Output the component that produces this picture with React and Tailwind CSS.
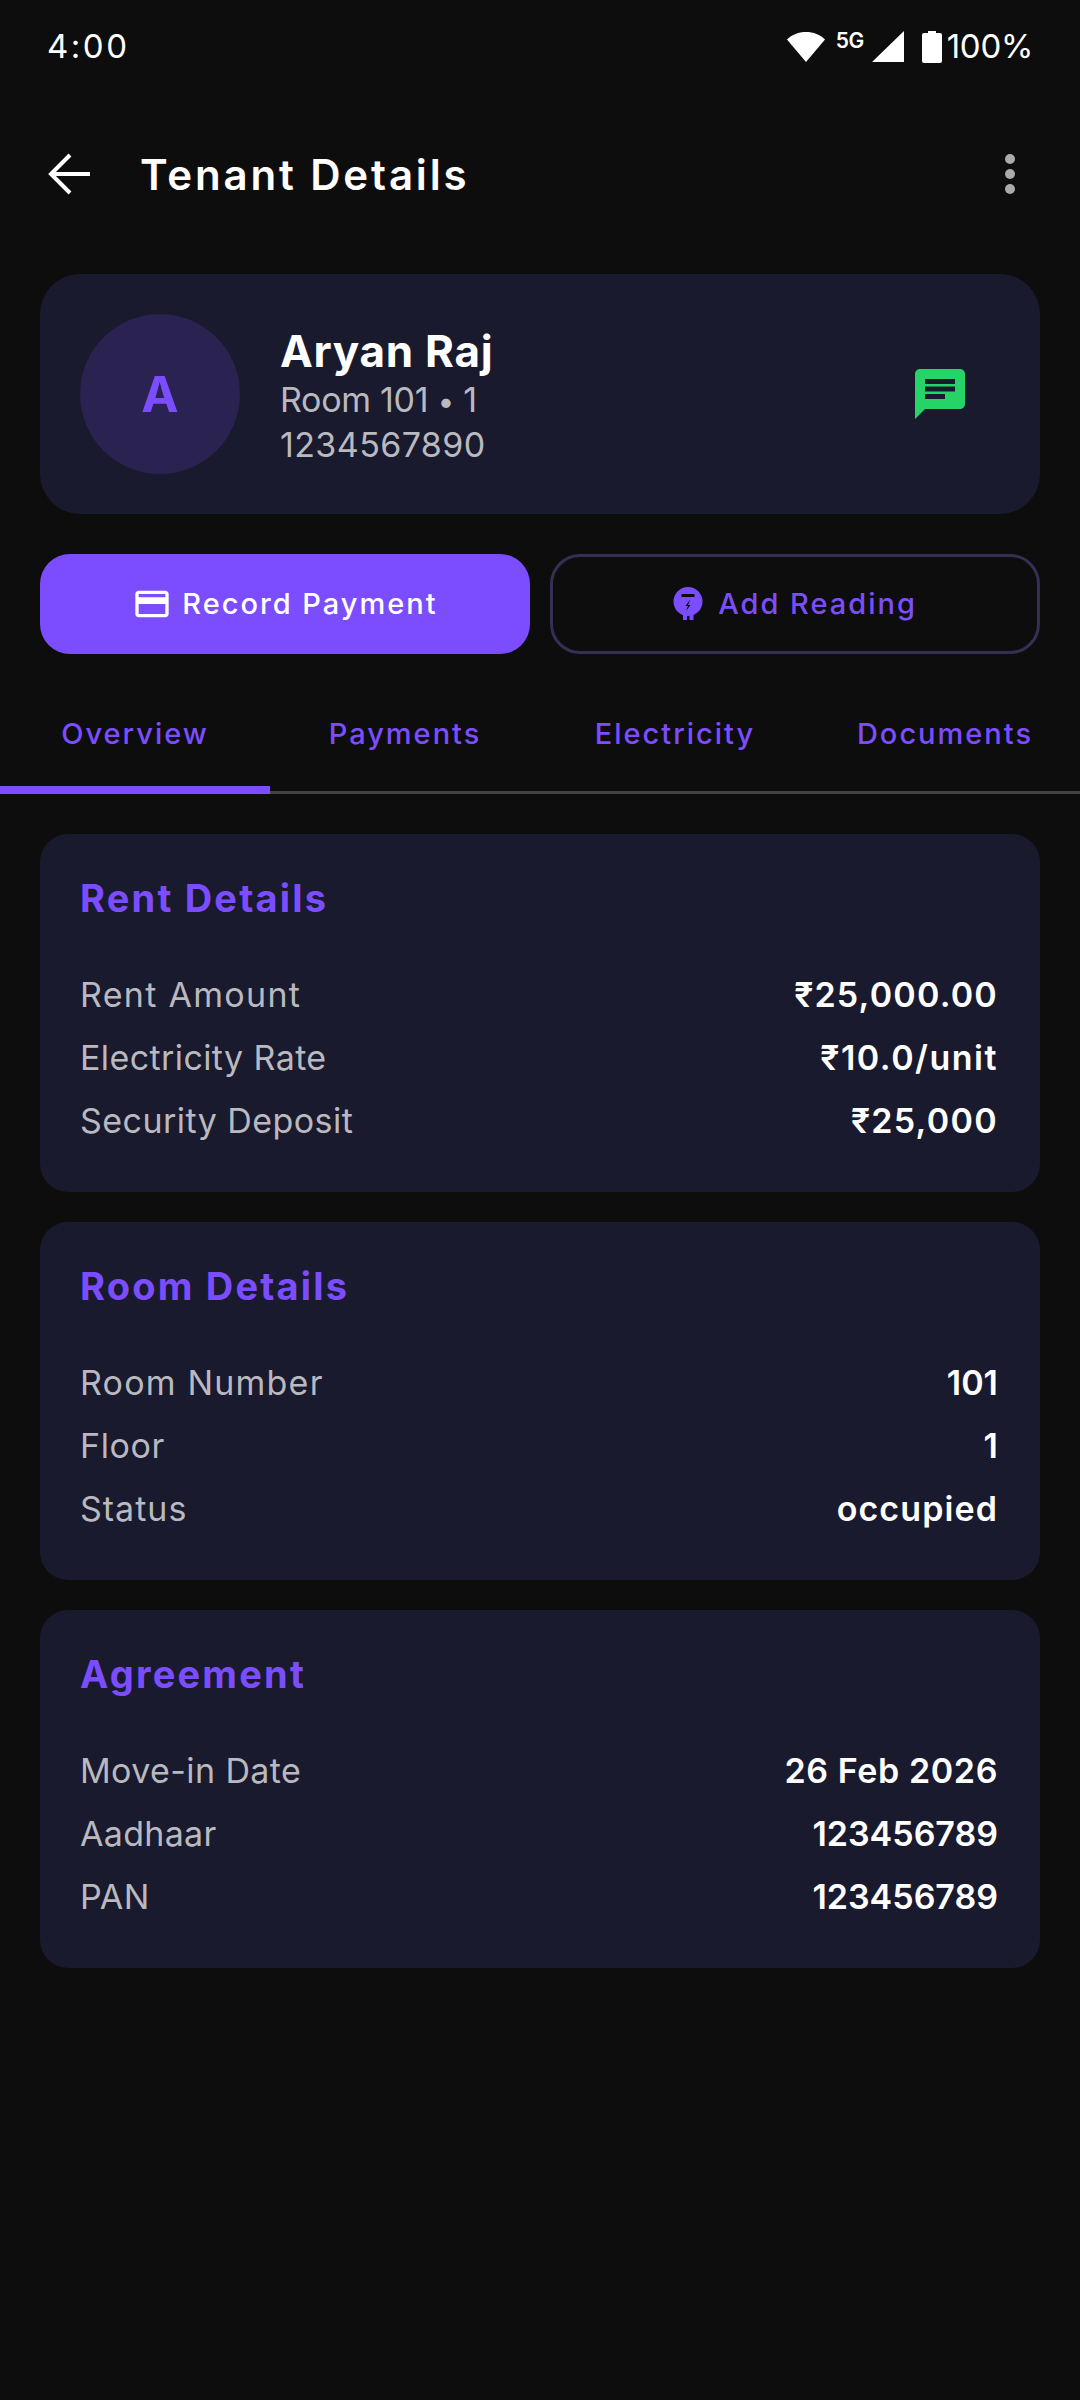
const FONT = "font-['Inter','Noto_Sans',sans-serif]";

function Row({ label, value, lt, vt }) {
  return (
    <div className="flex h-[63px] items-center justify-between">
      <span className={`text-[34px] text-[#b9b9bf] ${lt}`}>{label}</span>
      <span className={`text-[34px] font-semibold text-white ${vt}`}>{value}</span>
    </div>
  );
}

function Card({ title, rows }) {
  return (
    <section className="h-[358px] rounded-[28px] bg-[#1a1a2e] pt-[41px] pr-[42px] pl-10">
      <h2 className="mb-[41px] h-[47px] text-[38px] leading-[47px] font-bold tracking-[2.2px] text-[#7c4dff]">{title}</h2>
      {rows.map((r) => <Row key={r.label} {...r} />)}
    </section>
  );
}

function Tab({ children }) {
  return (
    <div className="flex flex-1 items-center justify-center pt-[22px] text-[29px] font-medium tracking-[2px] text-[#7c4dff]">
      {children}
    </div>
  );
}

export default function App() {
  return (
    <div className={`${FONT} h-[2400px] w-[1080px] overflow-hidden bg-[#0d0d0d] text-white`}>
      <div className="flex h-[92px] items-center justify-between pt-[2px] pr-[47px] pl-[47px]">
        <span className="text-[33px] tracking-[2.5px]">4:00</span>
        <div className="flex items-center">
          <svg width="40" height="32" viewBox="0 0 40 32" className="mr-[10px]"><path d="M20 31 1 8.5C6 3.5 12.5 1 20 1s14 2.5 19 7.5z" fill="#fff" /></svg>
          <span className="mr-[7px] mb-[14px] w-[29px] text-[21px] leading-none font-semibold tracking-[-0.5px]">5G</span>
          <svg width="32" height="32" viewBox="0 0 32 32" className="mr-[18px]"><path d="M32 0v31H0z" fill="#fff" /></svg>
          <svg width="20" height="32" viewBox="0 0 20 32" className="mr-[5px]"><path d="M6 0h8v2h4a2 2 0 0 1 2 2v26a2 2 0 0 1-2 2H2a2 2 0 0 1-2-2V4a2 2 0 0 1 2-2h4z" fill="#fff" /></svg>
          <span className="text-[33px] tracking-[-0.3px]">100%</span>
        </div>
      </div>

      <header className="flex h-[164px] items-center pr-[65px] pl-[47px]">
        <svg width="44" height="44" viewBox="0 0 44 44" fill="none" stroke="#fff" strokeWidth="4" className="mr-[48px] ml-[1px] shrink-0">
          <path d="M3 22h39M22 3 3 22l19 19" />
        </svg>
        <h1 className="flex-1 text-[42px] font-semibold tracking-[2.85px]">Tenant Details</h1>
        <svg width="10" height="40" viewBox="0 0 10 40" fill="#aaa"><circle cx="5" cy="5" r="5" /><circle cx="5" cy="20" r="5" /><circle cx="5" cy="35" r="5" /></svg>
      </header>

      <div className="px-10 pt-[18px]">
        <section className="flex h-[240px] items-center rounded-[40px] bg-[#1a1a2e] pr-[70px] pl-10">
          <div className="flex h-[160px] w-[160px] items-center justify-center rounded-full bg-[#2a2250] text-[50px] font-bold text-[#7c4dff]">A</div>
          <div className="ml-10 flex-1 pt-[4px]">
            <div className="mb-[2px] text-[44px] leading-[50px] font-bold tracking-[0.7px]">Aryan Raj</div>
            <div className="text-[34px] leading-[43px] tracking-[-0.3px] text-[#b9b9bf]">Room 101 <span className="text-[30px]">•</span> 1</div>
            <div className="text-[34px] leading-[43px] tracking-[0.4px] text-[#b9b9bf]">1234567890</div>
          </div>
          <svg width="60" height="60" viewBox="0 0 24 24" fill="#25d366"><path d="M20 2H4c-1.1 0-1.99.9-1.99 2L2 22l4-4h14c1.1 0 2-.9 2-2V4c0-1.1-.9-2-2-2zM6 9h12v2H6V9zm8 5H6v-2h8v2zm4-6H6V6h12v2z" /></svg>
        </section>

        <div className="mt-10 flex gap-5">
          <button className="flex h-[100px] w-[490px] items-center justify-center gap-[10px] rounded-[30px] bg-[#7c4dff] text-[29px] font-medium tracking-[2px] text-white">
            <svg width="40" height="40" viewBox="0 0 24 24" fill="#fff"><path d="M20 4H4c-1.11 0-1.99.89-1.99 2L2 18c0 1.11.89 2 2 2h16c1.11 0 2-.89 2-2V6c0-1.11-.89-2-2-2zm0 14H4v-6h16v6zm0-10H4V6h16v2z" /></svg>
            Record Payment
          </button>
          <button className="flex h-[100px] w-[490px] items-center justify-center gap-[15px] rounded-[30px] border-[3px] border-[#352f55] text-[29px] font-medium tracking-[2px] text-[#7c4dff]">
            <svg width="30" height="36" viewBox="0 0 30 36" fill="#7c4dff">
              <path fillRule="evenodd" d="M15 1a14.5 14.5 0 1 0 0 29a14.5 14.5 0 1 0 0-29zM8.5 8h13v3h-13zM16.5 14.5l-4 5.5h2.5l-2 5 4.5-6h-2.5l2-4.5z" />
              <rect x="10" y="27" width="4" height="7" />
              <rect x="16.5" y="27" width="4" height="7" />
            </svg>
            Add Reading
          </button>
        </div>
      </div>

      <nav className="relative flex h-[140px] border-b-[3px] border-[#444]">
        <Tab>Overview</Tab><Tab>Payments</Tab><Tab>Electricity</Tab><Tab>Documents</Tab>
        <div className="absolute bottom-[-3px] left-0 h-2 w-[270px] bg-[#7c4dff]" />
      </nav>

      <main className="flex flex-col gap-[30px] px-10 pt-10">
        <Card title="Rent Details" rows={[
          { label: "Rent Amount", value: "₹25,000.00", lt: "tracking-[1.3px]", vt: "tracking-[1.2px]" },
          { label: "Electricity Rate", value: "₹10.0/unit", lt: "tracking-[0.4px]", vt: "tracking-[1.5px]" },
          { label: "Security Deposit", value: "₹25,000", lt: "tracking-[0.45px]", vt: "tracking-[1.3px]" },
        ]} />
        <Card title="Room Details" rows={[
          { label: "Room Number", value: "101", lt: "tracking-[1.2px]", vt: "tracking-[0px]" },
          { label: "Floor", value: "1", lt: "tracking-[0.6px]", vt: "tracking-[0px]" },
          { label: "Status", value: "occupied", lt: "tracking-[1px]", vt: "tracking-[1.1px]" },
        ]} />
        <Card title="Agreement" rows={[
          { label: "Move-in Date", value: "26 Feb 2026", lt: "tracking-[0.4px]", vt: "tracking-[0.6px]" },
          { label: "Aadhaar", value: "123456789", lt: "tracking-[0.3px]", vt: "tracking-[0px]" },
          { label: "PAN", value: "123456789", lt: "tracking-[0.6px]", vt: "tracking-[0px]" },
        ]} />
      </main>
    </div>
  );
}
